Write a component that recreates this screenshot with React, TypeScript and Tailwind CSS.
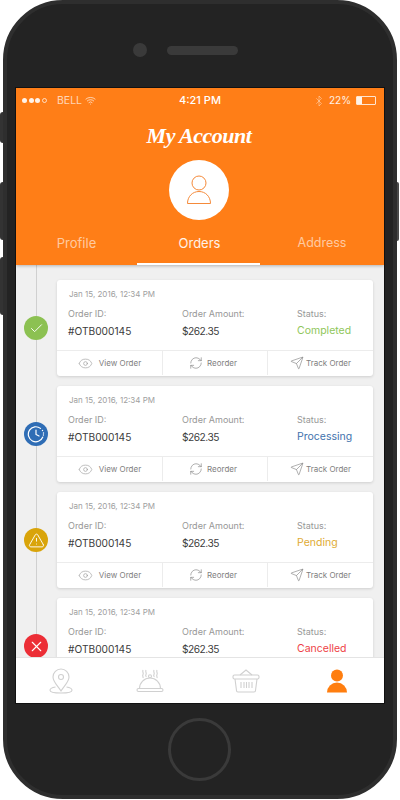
import React from "react";
import { Check, X, Eye, RefreshCw, Send, Wifi, Bluetooth, TriangleAlert } from "lucide-react";

const sans = "font-['Inter','Noto_Sans',sans-serif]";

function ClockBroken() {
  return (
    <svg width="18" height="18" viewBox="0 0 18 18" fill="none" stroke="white" strokeWidth="1.2" strokeLinecap="round">
      <path d="M13.500 3.400A7.500 7.500 0 1 0 15.800 12" />
      <path d="M9 5v4.500l3 1.500" />
      <path d="M15.500 5.500v.01M16.500 8v.01M16.400 10v.01" strokeWidth="1.400" />
    </svg>
  );
}

const orders = [
  { status: "Completed", color: "text-[#8fc65a]", bg: "bg-[#8cc152]", icon: <Check size={15} strokeWidth={1.5} /> },
  { status: "Processing", color: "text-[#3f72ad]", bg: "bg-[#2f6db5]", icon: <ClockBroken /> },
  { status: "Pending", color: "text-[#e0ab34]", bg: "bg-[#d9a40a]", icon: <TriangleAlert size={17} strokeWidth={1.3} /> },
  { status: "Cancelled", color: "text-[#ee3f46]", bg: "bg-[#ec2e36]", icon: <X size={17} strokeWidth={1.6} /> },
];

function OrderRow({ status, color, bg, icon }: { status: string; color: string; bg: string; icon: React.ReactNode }) {
  return (
    <div className="flex items-center shrink-0">
      <div className={`relative z-10 ml-2 mr-[9px] w-6 h-6 rounded-full shrink-0 flex items-center justify-center text-white ${bg}`}>
        {icon}
      </div>
      <div className="w-[316px] h-[96px] bg-white rounded-[3px] shadow-[0_1px_3px_rgba(0,0,0,0.14)] flex flex-col shrink-0">
        <div className="flex-1 pl-[11px] pt-[8px]">
          <div className="text-[8px] leading-3 pl-px text-[#a0a0a0]">Jan 15, 2016, 12:34 PM</div>
          <div className="flex mt-[8px]">
            <div className="w-[114px]">
              <div className="text-[9px] leading-3 text-[#979797]">Order ID:</div>
              <div className="text-[10.2px] leading-3 mt-[5px] text-[#3c3c3c]">#OTB000145</div>
            </div>
            <div className="w-[115px]">
              <div className="text-[9px] leading-3 text-[#979797]">Order Amount:</div>
              <div className="text-[10.2px] leading-3 mt-[5px] tracking-[-0.5px] text-[#3c3c3c]">$262.35</div>
            </div>
            <div>
              <div className="text-[9px] leading-3 text-[#979797]">Status:</div>
              <div className={`text-[10.5px] leading-3 mt-[5px] ${color}`}>{status}</div>
            </div>
          </div>
        </div>
        <div className="h-[26px] flex border-t border-[#ececec] text-[8px] text-[#808080] pb-px">
          <div className="w-[106px] flex items-center justify-center gap-[6px] border-r border-[#ececec]">
            <Eye size={15} strokeWidth={1} className="text-[#999]" />
            View Order
          </div>
          <div className="w-[105px] flex items-center justify-center gap-[4px] pr-[4px] border-r border-[#ececec]">
            <RefreshCw size={14} strokeWidth={1} className="text-[#777]" />
            Reorder
          </div>
          <div className="flex-1 flex items-center justify-center gap-[2px]">
            <Send size={14} strokeWidth={1} className="text-[#777]" />
            Track Order
          </div>
        </div>
      </div>
    </div>
  );
}

function NavIcons() {
  return (
    <div className="h-[46px] shrink-0 bg-white border-t border-[#e4e4e4] flex items-center relative z-10">
      <div className="flex-1 flex justify-center">
        <svg width="24" height="26" viewBox="0 0 24 26" fill="none" stroke="#d0d0d0" strokeWidth="1.100">
          <path d="M12 1a8 8 0 0 0-8 8c0 5 5 9 8 14 3-5 8-9 8-14a8 8 0 0 0-8-8z" />
          <circle cx="12" cy="9" r="2.500" />
          <path d="M6.500 19C3 19.600 1 20.800 1 22.200 1 24 6 25 12 25s11-1 11-2.800c0-1.400-2-2.600-5.500-3.200" />
        </svg>
      </div>
      <div className="flex-1 flex justify-center pr-[6px]">
        <svg width="28" height="24" viewBox="0 0 28 24" fill="none" stroke="#d0d0d0" strokeWidth="1.100">
          <path d="M3.500 19.500a10.500 10.500 0 0 1 21 0z" />
          <rect x="1" y="19.500" width="26" height="3" rx="1.500" />
          <circle cx="14" cy="7.300" r="1.500" />
          <path d="M7 1c-1 2 1 3 0 4.500s.5 2 0 3.500M10 1c-1 2 1 3 0 4.500s.5 1.500 0 2.500M18 1c-1 2 1 3 0 4.500s.5 1.500 0 2.500M21 1c-1 2 1 3 0 4.500s.5 2 0 3.500" />
        </svg>
      </div>
      <div className="flex-1 flex justify-center pr-[2px]">
        <svg width="28" height="24" viewBox="0 0 28 24" fill="none" stroke="#d0d0d0" strokeWidth="1.100">
          <rect x="1" y="6" width="26" height="4" rx="1.500" />
          <path d="M3 10l1.500 11.500a1.500 1.500 0 0 0 1.500 1.500h16a1.500 1.500 0 0 0 1.500-1.500L25 10" />
          <path d="M8 6l6-5 6 5M9 13v6M12 13v6M14.500 13v6M17 13v6M20 13v6" />
        </svg>
      </div>
      <div className="flex-1 flex justify-center pr-[2px]">
        <svg width="20" height="24" viewBox="0 0 20 24" fill="#ff7e0f">
          <circle cx="10" cy="6.500" r="6" />
          <path d="M0 23.500a10 10 0 0 1 20 0z" />
        </svg>
      </div>
    </div>
  );
}

export default function App() {
  return (
    <div className={`w-[400px] h-[800px] bg-white overflow-hidden ${sans}`}>
      <div className="relative mx-[3px] h-[799px] rounded-[60px] bg-[#232323] border-[4px] border-[#2e2e2e] flex flex-col">
        {/* side buttons */}
        <div className="absolute -left-[7px] top-[108px] w-[3px] h-[31px] bg-[#333] rounded-l-sm" />
        <div className="absolute -left-[7px] top-[178px] w-[3px] h-[58px] bg-[#333] rounded-l-sm" />
        <div className="absolute -left-[7px] top-[253px] w-[3px] h-[58px] bg-[#333] rounded-l-sm" />
        <div className="absolute -right-[6px] top-[178px] w-[2px] h-[59px] bg-[#4a4a4a] rounded-r-sm" />

        <div className="h-[84px] shrink-0 flex items-center justify-center gap-[20px] pt-[8px] pr-[29px]">
          <div className="w-[14px] h-[14px] rounded-full bg-[#3a3a3a]" />
          <div className="w-[71px] h-[9px] rounded-full bg-[#3a3a3a]" />
        </div>

        <div className="mx-[9px] h-[615px] shrink-0 bg-[#f0f0f0] flex flex-col overflow-hidden shadow-[0_0_0_1px_#111]">
          <div className="bg-[#ff7e17] shrink-0 h-[177px] flex flex-col relative z-20 shadow-[0_1px_3px_rgba(0,0,0,0.25)]">
            <div className="h-[25px] shrink-0 relative flex items-center pl-[6px] pr-2 text-[10px] text-white">
              <div className="flex items-center gap-[1.500px]">
                <span className="w-[5px] h-[5px] rounded-full bg-white/90" />
                <span className="w-[5px] h-[5px] rounded-full bg-white/90" />
                <span className="w-[5px] h-[5px] rounded-full bg-white/90" />
                <span className="w-[5px] h-[5px] rounded-full border border-white/70" />
              </div>
              <span className="ml-[10.500px] text-white/70 text-[10.500px] relative z-10">BELL</span>
              <Wifi size={11} strokeWidth={2} className="ml-[3px] text-white/70" />
              <span className="absolute left-0 right-0 text-center text-[11px] font-medium">4:21 PM</span>
              <div className="ml-auto flex items-center">
                <Bluetooth size={12} strokeWidth={1.5} className="text-white/50" />
                <span className="ml-[4px] text-white/90">22%</span>
                <div className="ml-[5px] w-5 h-[9px] border border-white/80 rounded-[1px]">
                  <div className="w-[5px] h-full bg-white/90" />
                </div>
              </div>
            </div>
            <div className="text-center text-white text-[22px] leading-[26px] mt-[10px] font-bold italic font-['Liberation_Serif',serif] tracking-[-0.5px] pr-[2px]">
              My Account
            </div>
            <div className="w-[60px] h-[60px] rounded-full bg-white self-center mt-[11px] mr-[2px] flex items-center justify-center">
              <svg width="26" height="30" viewBox="0 0 26 30" fill="none" stroke="#f58a3a" strokeWidth="1">
                <circle cx="13" cy="8" r="7" />
                <path d="M1.500 28.500c0-7 5-12 11.500-12s11.500 5 11.500 12z" />
              </svg>
            </div>
            <div className="flex-1 flex items-stretch text-[13px]">
              <div className="w-[121px] flex items-center justify-center text-white/60 pt-[2px]">Profile</div>
              <div className="w-[123px] flex items-center justify-center text-white/90 border-b-2 border-white mt-[3px] pt-[1px] pl-[2px]">Orders</div>
              <div className="flex-1 flex items-center justify-center text-white/60 pt-[2px] text-[12.500px]">Address</div>
            </div>
          </div>

          <div className="flex-1 min-h-0 relative overflow-hidden pt-[15px] flex flex-col gap-[10px]">
            <div className="absolute left-[20px] top-0 bottom-0 w-px bg-[#d0d0d0]" />
            {orders.map((o) => (
              <OrderRow key={o.status} {...o} />
            ))}
          </div>

          <NavIcons />
        </div>

        <div className="flex-1 flex items-center justify-center pr-[2px]">
          <div className="w-[63px] h-[63px] rounded-full border-[3px] border-[#3a3a3a]" />
        </div>
      </div>
    </div>
  );
}
